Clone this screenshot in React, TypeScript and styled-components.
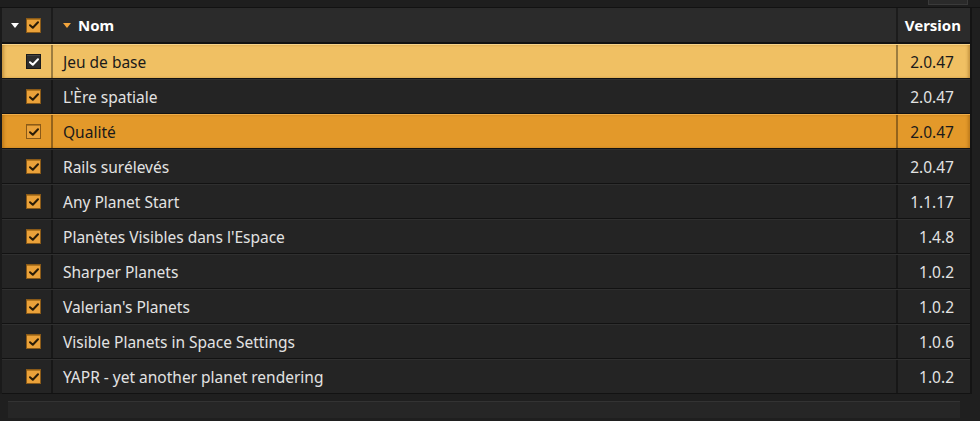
import React from 'react';
import styled, { createGlobalStyle } from 'styled-components';

const GlobalStyle = createGlobalStyle`
	html, body {
		margin: 0;
		padding: 0;
		background: #1c1c1c;
	}
	body {
		font-family: "Noto Sans", "Open Sans", sans-serif;
		-webkit-font-smoothing: antialiased;
	}
`;

type Mod = { name: string; version: string; state?: 'hover' | 'active' };

const mods: Mod[] = [
	{ name: 'Jeu de base', version: '2.0.47', state: 'hover' },
	{ name: "L'Ère spatiale", version: '2.0.47' },
	{ name: 'Qualité', version: '2.0.47', state: 'active' },
	{ name: 'Rails surélevés', version: '2.0.47' },
	{ name: 'Any Planet Start', version: '1.1.17' },
	{ name: "Planètes Visibles dans l'Espace", version: '1.4.8' },
	{ name: 'Sharper Planets', version: '1.0.2' },
	{ name: "Valerian's Planets", version: '1.0.2' },
	{ name: 'Visible Planets in Space Settings', version: '1.0.6' },
	{ name: 'YAPR - yet another planet rendering', version: '1.0.2' },
];

const Check: React.FC<{ color: string }> = ({ color }) => (
	<svg width="10" height="8" viewBox="0 0 10 8">
		<path d="M1 4.2 L3.8 6.8 L9 1.2" fill="none" stroke={color} strokeWidth="2" strokeLinecap="round" strokeLinejoin="round" />
	</svg>
);

const App: React.FC = () => {
	return (
		<Frame>
			<GlobalStyle />
			<TopStrip>
				<TopTab />
			</TopStrip>
			<Table>
				<HeaderRow>
					<CheckCell>
						<Arrow color="#ffffff" />
						<Box variant="orange">
							<Check color="#2a1c08" />
						</Box>
					</CheckCell>
					<NameCell>
						<Arrow color="#f3a53c" />
						<HeaderText>Nom</HeaderText>
					</NameCell>
					<VersionCell header>
						<HeaderText>Version</HeaderText>
					</VersionCell>
				</HeaderRow>
				{mods.map((m) => (
					<Row key={m.name} state={m.state}>
						<CheckCell>
							<Box variant={m.state === 'hover' ? 'dark' : 'orange'}>
								<Check color={m.state === 'hover' ? '#ffffff' : '#2a1c08'} />
							</Box>
						</CheckCell>
						<NameCell>
							<CellText dark={!!m.state}>{m.name}</CellText>
						</NameCell>
						<VersionCell>
							<CellText dark={!!m.state}>{m.version}</CellText>
						</VersionCell>
					</Row>
				))}
			</Table>
			<Footer>
				<FooterBar />
			</Footer>
		</Frame>
	);
};

export default App;

const Frame = styled.div`
	width: 980px;
	height: 421px;
	display: flex;
	flex-direction: column;
	background: #1f1f1f;
	overflow: hidden;
`;

const TopStrip = styled.div`
	height: 7px;
	background: #1e1e1e;
	display: flex;
	justify-content: flex-end;
	padding-right: 12px;
	border-bottom: 1px solid #121212;
`;

const TopTab = styled.div`
	width: 38px;
	height: 4px;
	background: #2a2a2a;
	border: 1px solid #3a3a3a;
	border-top: none;
`;

const Table = styled.div`
	display: flex;
	flex-direction: column;
	margin-right: 8px;
	border-right: 2px solid #141414;
	border-left: 2px solid #1a1a1a;
`;

const HeaderRow = styled.div`
	height: 34px;
	display: grid;
	grid-template-columns: 51px 1fr 72px;
	background: #2b2b2b;
	border-bottom: 2px solid #121212;
	color: #ffffff;
`;

const Row = styled.div<{ state?: 'hover' | 'active' }>`
	height: 33px;
	display: grid;
	grid-template-columns: 51px 1fr 72px;
	background: ${(p) => (p.state === 'hover' ? '#f0c063' : p.state === 'active' ? '#e3992a' : '#242424')};
	border-top: 1px solid ${(p) => (p.state === 'hover' ? '#f8d48a' : p.state === 'active' ? '#f0ae4a' : '#2f2f2f')};
	border-bottom: 1px solid #121212;
	box-shadow: ${(p) => (p.state ? 'inset 3px 0 3px -1px rgba(120,70,0,0.35), inset -3px 0 3px -1px rgba(120,70,0,0.35)' : 'none')};
`;

const CheckCell = styled.div`
	display: flex;
	align-items: center;
	justify-content: flex-end;
	gap: 7px;
	padding-right: 10px;
	border-right: 2px solid rgba(0, 0, 0, 0.35);
`;

const NameCell = styled.div`
	display: flex;
	align-items: center;
	gap: 7px;
	padding-left: 10px;
	border-right: 2px solid rgba(0, 0, 0, 0.35);
	min-width: 0;
`;

const VersionCell = styled.div<{ header?: boolean }>`
	display: flex;
	align-items: center;
	justify-content: flex-end;
	padding-right: ${(p) => (p.header ? '9px' : '16px')};
`;

const Arrow = styled.span<{ color: string }>`
	width: 0;
	height: 0;
	border-left: 4.5px solid transparent;
	border-right: 4.5px solid transparent;
	border-top: 5px solid ${(p) => p.color};
`;

const Box = styled.span<{ variant: 'orange' | 'dark' }>`
	width: 15px;
	height: 15px;
	box-sizing: border-box;
	display: flex;
	align-items: center;
	justify-content: center;
	background: ${(p) => (p.variant === 'orange' ? '#eba23a' : '#2e2e2e')};
	border: 1px solid ${(p) => (p.variant === 'orange' ? '#8a5a18' : '#1a1a1a')};
	box-shadow: ${(p) => (p.variant === 'orange' ? 'inset 0 1px 0 #b5781f' : 'inset 0 1px 0 #444')};
`;

const HeaderText = styled.span`
	font-size: 15px;
	font-weight: 700;
	color: #ffffff;
`;

const CellText = styled.span<{ dark: boolean }>`
	font-size: 15.5px;
	color: ${(p) => (p.dark ? '#1a1a1a' : '#e2e2e2')};
	white-space: nowrap;
`;

const Footer = styled.div`
	flex: 1;
	padding: 7px 20px 0 8px;
	background: #1f1f1f;
`;

const FooterBar = styled.div`
	height: 16px;
	background: #262626;
	border-top: 1px solid #333333;
`;
